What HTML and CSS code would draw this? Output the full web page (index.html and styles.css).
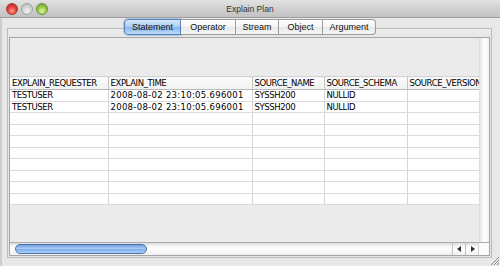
FILE: index.html
```html
<!DOCTYPE html>
<html>
<head>
<meta charset="utf-8">
<link rel="stylesheet" href="styles.css">
</head>
<body>
<div class="window">
  <div class="titlebar">
    <div class="lights">
      <span class="light red"></span>
      <span class="light off"></span>
      <span class="light green"></span>
    </div>
    <div class="title">Explain Plan</div>
    <div></div>
  </div>
  <div class="content">
    <div class="tabs">
      <span class="tab sel w1">Statement</span>
      <span class="tab w2">Operator</span>
      <span class="tab w3">Stream</span>
      <span class="tab w4">Object</span>
      <span class="tab w5 last">Argument</span>
    </div>
    <div class="panel">
      <div class="scrollpane">
        <div class="main">
          <div class="viewport">
            <div class="gap"></div>
            <table class="grid">
              <colgroup>
                <col class="c1"><col class="c2"><col class="c3"><col class="c4"><col class="c5">
              </colgroup>
              <thead>
                <tr><th>EXPLAIN_REQUESTER</th><th>EXPLAIN_TIME</th><th>SOURCE_NAME</th><th>SOURCE_SCHEMA</th><th>SOURCE_VERSION</th></tr>
              </thead>
              <tbody>
                <tr><td>TESTUSER</td><td class="num">2008-08-02 23:10:05.696001</td><td>SYSSH200</td><td>NULLID</td><td></td></tr>
                <tr><td>TESTUSER</td><td class="num">2008-08-02 23:10:05.696001</td><td>SYSSH200</td><td>NULLID</td><td></td></tr>
                <tr><td></td><td></td><td></td><td></td><td></td></tr>
                <tr><td></td><td></td><td></td><td></td><td></td></tr>
                <tr><td></td><td></td><td></td><td></td><td></td></tr>
                <tr><td></td><td></td><td></td><td></td><td></td></tr>
                <tr><td></td><td></td><td></td><td></td><td></td></tr>
                <tr><td></td><td></td><td></td><td></td><td></td></tr>
                <tr><td></td><td></td><td></td><td></td><td></td></tr>
                <tr><td></td><td></td><td></td><td></td><td></td></tr>
              </tbody>
            </table>
          </div>
          <div class="vtrack"></div>
        </div>
        <div class="hbar">
          <div class="htrack"><div class="thumb"></div></div>
          <div class="arrow"><svg width="5" height="6" viewBox="0 0 5 6"><path d="M0 3 L4 0 L4 6 Z" fill="#333"/></svg></div>
          <div class="arrow"><svg width="5" height="6" viewBox="0 0 5 6"><path d="M5 3 L1 0 L1 6 Z" fill="#333"/></svg></div>
          <div class="corner"></div>
        </div>
      </div>
    </div>
  </div>
  <svg class="grip" width="9" height="9" viewBox="0 0 9 9">
    <path d="M9 1 L1 9 M9 4 L4 9 M9 7 L7 9" stroke="#8a8a8a" stroke-width="1"/>
  </svg>
</div>
</body>
</html>
```

FILE: styles.css
```css
html, body {
  margin: 0;
  padding: 0;
}
body {
  width: 500px;
  height: 266px;
  overflow: hidden;
  background: #e8e8e8;
  font-family: "DejaVu Sans", "Liberation Sans", sans-serif;
}
.window {
  position: relative;
  width: 500px;
  height: 266px;
  display: flex;
  flex-direction: column;
  background: #e8e8e8;
}
.titlebar {
  height: 17px;
  border-bottom: 1px solid #9c9c9c;
  background: linear-gradient(#e2e2e2, #cdcdcd 60%, #c3c3c3);
  display: grid;
  grid-template-columns: 1fr auto 1fr;
  align-items: center;
}
.lights {
  display: flex;
  gap: 3px;
  padding-left: 6px;
  padding-top: 1px;
}
.light {
  width: 12px;
  height: 12px;
  border-radius: 50%;
  box-sizing: border-box;
}
.light.red {
  background: radial-gradient(circle at 50% 70%, #ff9a8f 0, #e5463e 45%, #b8201a 100%);
  border: 1px solid #a33a33;
}
.light.off {
  background: radial-gradient(circle at 50% 70%, #f2f2f2 0, #d4d4d4 50%, #b5b5b5 100%);
  border: 1px solid #a2a2a2;
}
.light.green {
  background: radial-gradient(circle at 50% 70%, #e4f7a8 0, #9dcd4e 45%, #5f9a1e 100%);
  border: 1px solid #6a8f3a;
}
.title {
  font-family: "Liberation Sans", sans-serif;
  font-size: 8.5px;
  color: #333;
  padding-top: 1px;
}
.content {
  flex: 1;
  display: flex;
  flex-direction: column;
  padding: 1px 8px 8px 5px;
  border-left: 2px solid #cdcdcd;
}
.tabs {
  display: flex;
  justify-content: center;
  height: 16px;
  position: relative;
  z-index: 1;
  margin-left: 0;
  margin-right: -1px;
}
.tab {
  box-sizing: border-box;
  height: 16px;
  display: flex;
  align-items: center;
  justify-content: center;
  font-family: "Liberation Sans", sans-serif;
  font-size: 9px;
  color: #111;
  background: linear-gradient(#ffffff, #f3f3f3 50%, #e6e6e6 51%, #f6f6f6);
  border: 1px solid #9a9a9a;
  border-left: none;
}
.tab.sel {
  border: 1px solid #5a7fb8;
  border-radius: 4px 0 0 4px;
  background: linear-gradient(#d7e8fb, #a9ccf3 50%, #86b4ec 51%, #bcdcfb);
  box-shadow: 0 0 0 1px rgba(110,160,230,0.45);
}
.tab.last {
  border-radius: 0 4px 4px 0;
}
.w1 { width: 57px; }
.w2 { width: 55px; }
.w3 { width: 43px; }
.w4 { width: 44px; }
.w5 { width: 53px; }
.panel {
  flex: 1;
  margin-top: -7px;
  border: 1px solid #bcbcbc;
  background: linear-gradient(#ececec, #e6e6e6 9px, #e6e6e6);
  padding: 8px 1px 1px 1px;
  display: flex;
  flex-direction: column;
}
.scrollpane {
  flex: 1;
  border: 1px solid #a5a5a5;
  background: #ebebeb;
  display: flex;
  flex-direction: column;
  overflow: hidden;
}
.main {
  flex: 1;
  display: flex;
  min-height: 0;
}
.viewport {
  flex: 1;
  overflow: hidden;
  min-width: 0;
}
.gap {
  height: 38px;
}
.grid {
  border-collapse: collapse;
  table-layout: fixed;
  width: 530px;
  font-size: 8.5px;
  color: #000;
}
.c1 { width: 98px; }
.c2 { width: 144px; }
.c3 { width: 72px; }
.c4 { width: 83px; }
.c5 { width: 133px; }
.grid th {
  height: 12px;
  padding: 0 0 0 2px;
  text-align: left;
  font-weight: normal;
  letter-spacing: -0.4px;
  white-space: nowrap;
  overflow: hidden;
  background: linear-gradient(#fbfbfb, #f1f1f1);
  border-top: 1px solid #d2d2d2;
  border-bottom: 1px solid #b9b9b9;
  border-left: 1px solid #c4c4c4;
  line-height: 12px;
}
.grid th:first-child {
  border-left: none;
}
.grid td {
  height: 10.5px;
  padding: 0 0 0 2px;
  background: #fff;
  border-bottom: 1px solid #dcdcdc;
  border-left: 1px solid #d6d6d6;
  letter-spacing: -0.4px;
  white-space: nowrap;
  overflow: hidden;
  line-height: 10px;
}
.grid td:first-child {
  border-left: none;
}
.grid td.num {
  letter-spacing: 0.3px;
}
.vtrack {
  width: 10px;
  background: linear-gradient(90deg, #d9d9d9, #f4f4f4 3px, #ffffff 6px, #f2f2f2);
}
.hbar {
  height: 12px;
  border-top: 1px solid #aeaeae;
  display: flex;
  background: linear-gradient(#dadada, #f6f6f6 3px, #ffffff 6px, #efefef);
}
.htrack {
  flex: 1;
  padding: 1px 0 1px 5px;
}
.thumb {
  width: 132px;
  height: 10px;
  box-sizing: border-box;
  border: 1px solid #4f73a8;
  border-radius: 5px;
  background: linear-gradient(#6e9de0, #a7cdf6 45%, #7fb0ee 55%, #a9d0f8);
}
.arrow {
  width: 12px;
  display: flex;
  align-items: center;
  justify-content: center;
  border-left: 1px solid #c2c2c2;
}
.corner {
  width: 10px;
  background: #fbfbfb;
  border-left: 1px solid #d0d0d0;
}
.grip {
  position: absolute;
  right: 1px;
  bottom: 1px;
}
```
